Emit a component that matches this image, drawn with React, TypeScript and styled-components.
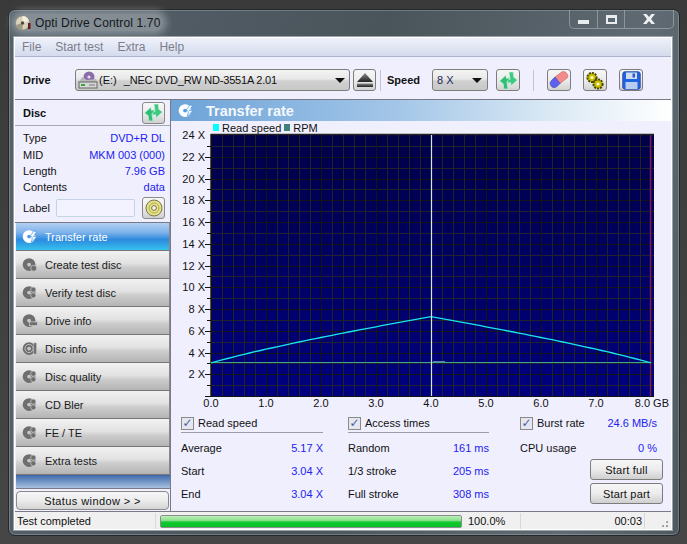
import React from "react";
import styled, { createGlobalStyle } from "styled-components";

const GlobalStyle = createGlobalStyle`
  html, body {
    margin: 0;
    padding: 0;
    background: #3d3d3d;
  }
  body {
    font-family: "Liberation Sans", Arial, sans-serif;
    font-size: 11px;
    color: #111;
  }
`;

const NAV_ITEMS = [
  { label: "Transfer rate", icon: "transfer" },
  { label: "Create test disc", icon: "create" },
  { label: "Verify test disc", icon: "gear" },
  { label: "Drive info", icon: "drive" },
  { label: "Disc info", icon: "info" },
  { label: "Disc quality", icon: "gear" },
  { label: "CD Bler", icon: "gear" },
  { label: "FE / TE", icon: "gear" },
  { label: "Extra tests", icon: "gear" },
];

const DISC_ROWS = [
  ["Type", "DVD+R DL"],
  ["MID", "MKM 003 (000)"],
  ["Length", "7.96 GB"],
  ["Contents", "data"],
];

const READ_ROWS = [
  ["Average", "5.17 X"],
  ["Start", "3.04 X"],
  ["End", "3.04 X"],
];

const ACCESS_ROWS = [
  ["Random", "161 ms"],
  ["1/3 stroke", "205 ms"],
  ["Full stroke", "308 ms"],
];

function RefreshIcon() {
  const arrow = "M0.5 9.5 L6.5 4 L7 7 L10.5 6.5 L9 10 L7.5 10 L8.5 17 L4.5 17 L4 12 Z";
  return (
    <svg width="19" height="19" viewBox="0 0 18 18">
      <path d={arrow} fill="#2fbf74" stroke="#d8f5e4" strokeWidth=".5" />
      <path d={arrow} fill="#3ccb80" stroke="#d8f5e4" strokeWidth=".5" transform="rotate(180 9 9)" />
    </svg>
  );
}

function DriveIcon() {
  return (
    <svg width="20" height="18" viewBox="0 0 20 18">
      <circle cx="11" cy="6" r="5.5" fill="#8a6cab" />
      <circle cx="11" cy="6" r="1.6" fill="#e6e0f0" />
      <path d="M4 6 L1 11 L19 11 L18 8 L9 9 Z" fill="#b8b8b8" />
      <rect x="1" y="11" width="18" height="6" fill="#d8d8d8" stroke="#666" />
      <rect x="3" y="13" width="4" height="2" fill="#3aa53a" />
      <rect x="11" y="13.5" width="6" height="1" fill="#777" />
    </svg>
  );
}

function EjectIcon() {
  return (
    <svg width="18" height="14" viewBox="0 0 18 14">
      <defs>
        <linearGradient id="ej" x1="0" y1="0" x2="0" y2="1">
          <stop offset="0" stopColor="#8a8a8a" />
          <stop offset="1" stopColor="#222" />
        </linearGradient>
      </defs>
      <path d="M9 0 L17 9 L1 9 Z" fill="url(#ej)" />
      <rect x="1" y="10.5" width="16" height="3.5" fill="url(#ej)" />
    </svg>
  );
}

function EraserIcon() {
  return (
    <svg width="20" height="18" viewBox="0 0 20 18">
      <path d="M6 6 L13 0.8 Q15 0 17 1.5 L18.5 3.5 Q19.5 6 18 7 L11 12.5 Z" fill="#f28b8b" stroke="#c96060" strokeWidth=".6" />
      <path d="M6 6 L11 12.5 L8 15.5 Q5.5 17.5 3 16 L1.5 14 Q0.5 11.5 2 10 Z" fill="#5c62ee" stroke="#3a3fb8" strokeWidth=".6" />
    </svg>
  );
}

function GearsIcon() {
  return (
    <svg width="20" height="19" viewBox="0 0 20 19">
      <circle cx="7" cy="6.5" r="4.6" fill="#c9c000" stroke="#4a4600" strokeWidth="2" strokeDasharray="2 1" />
      <circle cx="7" cy="6.5" r="1.5" fill="#fffbe0" />
      <circle cx="13" cy="13" r="4.6" fill="#c9c000" stroke="#4a4600" strokeWidth="2" strokeDasharray="2 1" />
      <circle cx="13" cy="13" r="1.5" fill="#fffbe0" />
    </svg>
  );
}

function FloppyIcon() {
  return (
    <svg width="19" height="19" viewBox="0 0 19 19">
      <rect x="0.8" y="0.8" width="17.4" height="17.4" rx="2" fill="#1f63e0" stroke="#2c4fa8" />
      <rect x="4" y="1.5" width="11" height="6.5" fill="#cfdcf2" />
      <rect x="3.5" y="11" width="12" height="7" fill="#b9cdf0" />
      <rect x="10.5" y="2.5" width="2.5" height="4" fill="#2c5cc0" />
    </svg>
  );
}

function DiscButtonIcon() {
  return (
    <svg width="18" height="18" viewBox="0 0 18 18">
      <circle cx="9" cy="9" r="8" fill="#e4e08c" stroke="#77774a" />
      <circle cx="9" cy="9" r="5" fill="none" stroke="#b3ae4c" />
      <circle cx="9" cy="9" r="2.4" fill="#f6f6e2" stroke="#77774a" />
    </svg>
  );
}

function TitleDisc() {
  return (
    <svg width="16" height="16" viewBox="0 0 16 16">
      <circle cx="7.5" cy="8" r="7" fill="#d8d2bc" stroke="#8a8468" strokeWidth=".6" />
      <path d="M7.5 1 A7 7 0 0 1 14 6 L7.5 8 Z" fill="#f4efd8" />
      <path d="M7.5 15 A7 7 0 0 1 1 10 L7.5 8 Z" fill="#9c9a84" />
      <circle cx="7.5" cy="8" r="1.7" fill="#4d4a3c" />
      <rect x="13" y="8" width="2.5" height="6" fill="#6b1a1a" />
    </svg>
  );
}

function SectionIcon({ kind, color }: { kind: string; color: string }) {
  const hole = kind === "transfer" ? "#4f9be6" : "#c8c8c8";
  return (
    <svg width="16" height="15" viewBox="0 0 17 16">
      <circle cx="7.5" cy="8" r="6.8" fill={color} />
      <circle cx="7.5" cy="8" r="2" fill={hole} />
      {kind === "transfer" && (
        <path d="M9 7 L13 2 L15.5 3 L12 8 L16 8 L10 14 L11 9.5 Z" fill={color} stroke={hole} strokeWidth=".8" />
      )}
      {kind === "create" && <circle cx="12.5" cy="12" r="3.2" fill={color} stroke="#ccc" strokeWidth=".8" />}
      {kind === "gear" && (
        <g fill={color} stroke="#ccc" strokeWidth=".8">
          <circle cx="12" cy="5" r="2.8" />
          <circle cx="12" cy="11" r="2.8" />
        </g>
      )}
      {kind === "drive" && <rect x="8" y="9.5" width="8.5" height="4" fill={color} stroke="#ccc" strokeWidth=".8" />}
      {kind === "info" && (
        <g>
          <circle cx="7.5" cy="8" r="4.4" fill="none" stroke="#ccc" strokeWidth=".9" />
          <rect x="12.5" y="2" width="3" height="12" fill={color} stroke="#ccc" strokeWidth=".6" />
        </g>
      )}
    </svg>
  );
}

function TransferChart() {
  // plot area inside the svg: x 40..483, y 1..262
  const left = 40;
  const right = 483;
  const top = 1;
  const bottom = 262;
  const stepY = 10.875;
  const stepX = 11;

  const hLines = Array.from({ length: 24 }, (_, i) => i);
  const vLines = Array.from({ length: 41 }, (_, i) => i);
  const xToPx = (gb: number) => left + gb * 55;
  const speedToPx = (x: number) => bottom - x * stepY;
  const snap = (y: number) => Math.round(y) + 0.5;

  const speedPts: string[] = [];
  for (let gb = 0; gb <= 8; gb += 0.1) {
    const d = gb <= 4 ? gb : 8 - gb;
    const curved = Math.sqrt(9.24 + 11 * d);
    const straight = 3.04 + (d / 4) * 4.26;
    speedPts.push(`${xToPx(gb).toFixed(1)},${speedToPx((curved + straight) / 2).toFixed(1)}`);
  }

  return (
    <ChartSvg width="500" height="278" viewBox="0 0 500 278">
      <defs>
        <linearGradient id="plotBg" x1="0" y1="0" x2="0" y2="1">
          <stop offset="0" stopColor="#000048" />
          <stop offset="1" stopColor="#00007f" />
        </linearGradient>
      </defs>
      <rect x={left} y={top} width={right - left} height={bottom - top} fill="url(#plotBg)" />
      {hLines.map((i) => (
        <line
          key={i}
          x1={left}
          x2={right}
          y1={snap(bottom - i * stepY)}
          y2={snap(bottom - i * stepY)}
          stroke={i % 2 === 0 ? "#141414" : "#22222a"}
        />
      ))}
      {vLines.map((i) => (
        <line
          key={i}
          x1={left + i * stepX + 0.5}
          x2={left + i * stepX + 0.5}
          y1={top}
          y2={bottom}
          stroke={i % 5 === 0 ? "#141418" : "#22222a"}
        />
      ))}
      <line x1={479.5} x2={479.5} y1={top} y2={bottom} stroke="#80107a" strokeWidth="1.4" />
      <line x1={left} x2={right} y1={0.5} y2={0.5} stroke="#222" strokeWidth="1.4" />
      <line x1={40} x2={40} y1={0} y2={bottom} stroke="#111" strokeWidth="1.4" />
      {hLines.map((i) => (
        <line
          key={i}
          x1={i % 2 === 0 ? 34 : 36}
          x2={40}
          y1={snap(bottom - i * stepY)}
          y2={snap(bottom - i * stepY)}
          stroke="#111"
        />
      ))}
      <line x1={40} x2={480} y1={228.5} y2={228.5} stroke="#3fa596" />
      <line x1={262} x2={274} y1={227.5} y2={227.5} stroke="#5a7fb0" />
      <polyline points={speedPts.join(" ")} fill="none" stroke="#19e6e6" strokeWidth="1.3" />
      <line x1={260.5} x2={260.5} y1={top} y2={bottom} stroke="#cfe8e2" strokeWidth="1.2" />
      <g fontFamily='"Liberation Sans", Arial, sans-serif' fontSize="11" fill="#111">
        {Array.from({ length: 12 }, (_, i) => (i + 1) * 2).map((v) => (
          <text key={v} x={34} y={speedToPx(v) + 4} textAnchor="end">
            {v} X
          </text>
        ))}
        {Array.from({ length: 8 }, (_, i) => i).map((v) => (
          <text key={v} x={xToPx(v)} y={273} textAnchor="middle">
            {v}.0
          </text>
        ))}
        <text x={498} y={273} textAnchor="end">
          8.0 GB
        </text>
      </g>
    </ChartSvg>
  );
}

export default function App() {
  return (
    <Screen>
      <GlobalStyle />
      <Window>
        <TitleBar>
          <TitleGroup>
            <TitleDisc />
            <TitleText>Opti Drive Control 1.70</TitleText>
          </TitleGroup>
          <CaptionButtons>
            <CaptionButton $width={28}>
              <MinGlyph />
            </CaptionButton>
            <CaptionButton $width={27}>
              <MaxGlyph />
            </CaptionButton>
            <CaptionButton $width={48}>
              <svg width="14" height="10" viewBox="0 0 14 10">
                <path d="M1 0 H4.5 L7 3 L9.5 0 H13 L9 5 L13 10 H9.5 L7 7 L4.5 10 H1 L5 5 Z" fill="#eef1f2" />
              </svg>
            </CaptionButton>
          </CaptionButtons>
        </TitleBar>
        <Client>
          <MenuBar>
            <MenuItem>File</MenuItem>
            <MenuItem>Start test</MenuItem>
            <MenuItem>Extra</MenuItem>
            <MenuItem>Help</MenuItem>
          </MenuBar>
          <Toolbar>
            <DriveLabel>Drive</DriveLabel>
            <DriveSelect>
              <DriveIcon />
              <DriveLetter>(E:)</DriveLetter>
              <DriveName>_NEC DVD_RW ND-3551A 2.01</DriveName>
              <Caret />
            </DriveSelect>
            <ToolButton $width={23} $ml={3}>
              <EjectIcon />
            </ToolButton>
            <ToolSeparator $ml={4} />
            <SpeedLabel>Speed</SpeedLabel>
            <SpeedSelect>
              8 X
              <Caret />
            </SpeedSelect>
            <ToolButton $width={24} $ml={8}>
              <RefreshIcon />
            </ToolButton>
            <ToolSeparator $ml={13} />
            <ToolButton $width={24} $ml={13}>
              <EraserIcon />
            </ToolButton>
            <ToolButton $width={24} $ml={12}>
              <GearsIcon />
            </ToolButton>
            <ToolButton $width={24} $ml={12}>
              <FloppyIcon />
            </ToolButton>
          </Toolbar>
          <Main>
            <SideColumn>
              <DiscPanel>
                <DiscHead>
                  <strong>Disc</strong>
                  <SmallButton>
                    <RefreshIcon />
                  </SmallButton>
                </DiscHead>
                <DiscRows>
                  {DISC_ROWS.map(([name, value]) => (
                    <DiscRow key={name}>
                      <span>{name}</span>
                      <Value>{value}</Value>
                    </DiscRow>
                  ))}
                </DiscRows>
                <LabelRow>
                  <span>Label</span>
                  <LabelInput />
                  <SmallButton>
                    <DiscButtonIcon />
                  </SmallButton>
                </LabelRow>
              </DiscPanel>
              <NavList>
                {NAV_ITEMS.map((item, i) => (
                  <NavItem key={item.label} $active={i === 0}>
                    <SectionIcon kind={item.icon} color={i === 0 ? "#ffffff" : "#6e6e6e"} />
                    <span>{item.label}</span>
                  </NavItem>
                ))}
              </NavList>
              <BlueStrip />
              <StatusButtonWrap>
                <StatusWindowButton>Status window &gt; &gt;</StatusWindowButton>
              </StatusButtonWrap>
            </SideColumn>
            <RightPanel>
              <PanelHeader>
                <SectionIcon kind="transfer" color="#ffffff" />
                <PanelTitle>Transfer rate</PanelTitle>
              </PanelHeader>
              <Legend>
                <Swatch $color="#00ffff" />
                <span>Read speed</span>
                <Swatch $color="#3f8079" />
                <span>RPM</span>
              </Legend>
              <TransferChart />
              <Results>
                <ResultColumn>
                  <CheckHead $line>
                    <CheckBox>✓</CheckBox>
                    Read speed
                  </CheckHead>
                  {READ_ROWS.map(([name, value]) => (
                    <ResultRow key={name}>
                      <span>{name}</span>
                      <Value>{value}</Value>
                    </ResultRow>
                  ))}
                </ResultColumn>
                <ResultColumn>
                  <CheckHead $line>
                    <CheckBox>✓</CheckBox>
                    Access times
                  </CheckHead>
                  {ACCESS_ROWS.map(([name, value]) => (
                    <ResultRow key={name}>
                      <span>{name}</span>
                      <Value>{value}</Value>
                    </ResultRow>
                  ))}
                </ResultColumn>
                <BurstColumn>
                  <CheckHead>
                    <CheckBox>✓</CheckBox>
                    Burst rate
                    <BurstValue>24.6 MB/s</BurstValue>
                  </CheckHead>
                  <CpuRow>
                    <span>CPU usage</span>
                    <Value>0 %</Value>
                  </CpuRow>
                  <StartButton>Start full</StartButton>
                  <StartButton>Start part</StartButton>
                </BurstColumn>
              </Results>
            </RightPanel>
          </Main>
          <StatusBar>
            <StatusText>Test completed</StatusText>
            <ProgressTrack>
              <ProgressFill style={{ width: "100%" }} />
            </ProgressTrack>
            <Percent>100.0%</Percent>
            <Elapsed>00:03</Elapsed>
            <Grip />
          </StatusBar>
        </Client>
      </Window>
    </Screen>
  );
}

const Screen = styled.div`
  width: 687px;
  height: 544px;
  padding: 9px 7px 8px 8px;
  box-sizing: border-box;
  overflow: hidden;
  background: linear-gradient(#3a3a3a, #464646);
`;

const Window = styled.div`
  width: 672px;
  height: 527px;
  box-sizing: border-box;
  padding: 0 7px 5px 5px;
  border: 1px solid #23282b;
  border-radius: 7px;
  background: linear-gradient(100deg, #56616a 0%, #49545b 50%, #5f6a72 85%, #4d585f 100%);
  box-shadow: inset 0 0 0 1px rgba(255, 255, 255, 0.22);
  display: flex;
  flex-direction: column;
`;

const TitleBar = styled.div`
  height: 27px;
  flex-shrink: 0;
  display: flex;
  justify-content: space-between;
  align-items: flex-start;
`;

const TitleGroup = styled.div`
  display: flex;
  align-items: center;
  gap: 4px;
  height: 17px;
  margin: 4px 0 0 1px;
  padding-right: 2px;
  border-radius: 9px;
  background: rgba(200, 208, 212, 0.42);
  box-shadow: 0 0 7px 4px rgba(200, 208, 212, 0.42);
`;

const TitleText = styled.span`
  font-size: 12px;
  letter-spacing: 0.15px;
  color: #14181b;
`;

const CaptionButtons = styled.div`
  display: flex;
  height: 18px;
  margin-right: -2px;
  border: 1px solid rgba(255, 255, 255, 0.3);
  border-top: none;
  border-radius: 0 0 5px 5px;
`;

const CaptionButton = styled.div<{ $width: number }>`
  width: ${(p) => p.$width}px;
  box-sizing: border-box;
  display: flex;
  align-items: center;
  justify-content: center;
  border-right: 1px solid rgba(255, 255, 255, 0.3);
  &:last-child {
    border-right: none;
  }
`;

const MinGlyph = styled.div`
  width: 11px;
  height: 4px;
  margin-top: 5px;
  background: #e8ecee;
`;

const MaxGlyph = styled.div`
  width: 7px;
  height: 4px;
  border: 2px solid #e8ecee;
  border-top-width: 3px;
`;

const Client = styled.div`
  flex: 1;
  min-height: 0;
  border: 1px solid #ffffff;
  outline: 1px solid #9aa3a8;
  background: #f0effe;
  display: flex;
  flex-direction: column;
`;

const MenuBar = styled.div`
  height: 18px;
  flex-shrink: 0;
  display: flex;
  align-items: center;
  padding-left: 7px;
  gap: 14px;
  font-size: 12px;
  background: linear-gradient(#eef1fa, #d4dbec);
  border-bottom: 1px solid #aeb3cc;
`;

const MenuItem = styled.span`
  color: #7d7d8e;
`;

const Toolbar = styled.div`
  height: 42px;
  flex-shrink: 0;
  box-sizing: border-box;
  padding: 12px 0 8px 8px;
  display: flex;
  align-items: center;
`;

const DriveLabel = styled.strong`
  width: 52px;
`;

const DriveSelect = styled.div`
  width: 275px;
  height: 22px;
  box-sizing: border-box;
  display: flex;
  align-items: center;
  padding: 0 4px 0 2px;
  border: 1px solid #7d7d7d;
  border-radius: 3px;
  background: linear-gradient(#f4f4f4 0%, #e8e8e8 45%, #d0d0d0 55%, #c8c8c8 100%);
`;

const DriveLetter = styled.span`
  margin-left: 1px;
`;

const DriveName = styled.span`
  margin-left: 7px;
  flex: 1;
  letter-spacing: -0.2px;
`;

const Caret = styled.span`
  width: 0;
  height: 0;
  border-left: 5px solid transparent;
  border-right: 5px solid transparent;
  border-top: 5px solid #111;
  margin-left: auto;
`;

const ToolButton = styled.div<{ $width: number; $ml: number }>`
  width: ${(p) => p.$width}px;
  height: 22px;
  margin-left: ${(p) => p.$ml}px;
  box-sizing: border-box;
  flex-shrink: 0;
  display: flex;
  align-items: center;
  justify-content: center;
  border: 1px solid #7d7d7d;
  border-radius: 3px;
  background: linear-gradient(#f6f6f6 0%, #ececec 50%, #d2d2d2 100%);
`;

const ToolSeparator = styled.div<{ $ml: number }>`
  width: 1px;
  height: 21px;
  margin-left: ${(p) => p.$ml}px;
  background: #c4c4cc;
`;

const SpeedLabel = styled.strong`
  width: 45px;
  margin-left: 6px;
`;

const SpeedSelect = styled.div`
  width: 56px;
  height: 22px;
  box-sizing: border-box;
  display: flex;
  align-items: center;
  padding: 0 5px 0 4px;
  color: #1c2a58;
  border: 1px solid #7d7d7d;
  border-radius: 3px;
  background: linear-gradient(#f4f4f4 0%, #e8e8e8 45%, #d0d0d0 55%, #c8c8c8 100%);
`;

const Main = styled.div`
  flex: 1;
  min-height: 0;
  display: flex;
  border-top: 1px solid #7a7a86;
  border-bottom: 1px solid #7a7a86;
`;

const SideColumn = styled.div`
  width: 155px;
  flex-shrink: 0;
  display: flex;
  flex-direction: column;
`;

const DiscPanel = styled.div`
  height: 122px;
  flex-shrink: 0;
  padding-left: 8px;
  padding-right: 5px;
  border-bottom: 1px solid #7a7a86;
`;

const DiscHead = styled.div`
  height: 25px;
  display: flex;
  align-items: center;
  justify-content: space-between;
  margin: 0 -5px 0 -8px;
  padding: 0 5px 0 8px;
  border-bottom: 1px solid #a8a8b4;
`;

const SmallButton = styled.div`
  width: 23px;
  height: 22px;
  box-sizing: border-box;
  flex-shrink: 0;
  display: flex;
  align-items: center;
  justify-content: center;
  border: 1px solid #8a8a8a;
  border-radius: 3px;
  background: linear-gradient(#f8f8f8 0%, #ececec 50%, #d0d0d0 100%);
`;

const DiscRows = styled.div`
  margin-top: 4px;
  display: flex;
  flex-direction: column;
`;

const DiscRow = styled.div`
  height: 16.4px;
  display: flex;
  align-items: center;
  justify-content: space-between;
`;

const Value = styled.span`
  color: #2222f0;
`;

const LabelRow = styled.div`
  margin-top: 1px;
  display: flex;
  align-items: center;
  gap: 6px;
  span {
    width: 27px;
  }
`;

const LabelInput = styled.div`
  width: 80px;
  height: 18px;
  box-sizing: border-box;
  margin-right: 1px;
  background: #f3f3ff;
  border: 1px solid #c2d4e6;
  border-radius: 2px;
`;

const NavList = styled.div`
  display: flex;
  flex-direction: column;
  padding-left: 1px;
`;

const NavItem = styled.div<{ $active?: boolean }>`
  height: 28px;
  box-sizing: border-box;
  display: flex;
  align-items: center;
  gap: 7px;
  padding-left: 6px;
  color: ${(p) => (p.$active ? "#ffffff" : "#1a1a1a")};
  border-bottom: 1px solid #77777a;
  background: ${(p) =>
    p.$active
      ? "linear-gradient(#b3d0f2 0%, #7db2ea 35%, #2c8ade 62%, #35c2ee 100%)"
      : "linear-gradient(#f2f2f2 0%, #e2e2e2 45%, #cdcdcd 60%, #b4b4b4 100%)"};
  border-right: 1px solid #8a8a8a;
`;

const BlueStrip = styled.div`
  height: 13px;
  flex-shrink: 0;
  margin-left: 1px;
  background: linear-gradient(#3d68a8, #a7c2e2);
  border-bottom: 1px solid #7a7a86;
`;

const StatusButtonWrap = styled.div`
  flex: 1;
  padding: 2px 1px 0 1px;
`;

const StatusWindowButton = styled.div`
  height: 19px;
  box-sizing: border-box;
  display: flex;
  align-items: center;
  justify-content: center;
  letter-spacing: 0.4px;
  border: 1px solid #8a8a8a;
  border-radius: 4px;
  background: linear-gradient(#f6f6f6 0%, #ececec 50%, #d4d4d4 100%);
`;

const RightPanel = styled.div`
  flex: 1;
  min-width: 0;
  display: flex;
  flex-direction: column;
  border-left: 1px solid #7a7a86;
`;

const PanelHeader = styled.div`
  height: 21px;
  flex-shrink: 0;
  display: flex;
  align-items: center;
  padding-left: 7px;
  gap: 12px;
  background: linear-gradient(90deg, #6da3d8 0%, #a3c6e8 45%, #d8e8f4 75%, #ffffff 100%);
`;

const PanelTitle = styled.span`
  font-size: 14.5px;
  font-weight: bold;
  color: #f4f8fc;
`;

const Legend = styled.div`
  height: 13px;
  flex-shrink: 0;
  display: flex;
  align-items: center;
  padding-left: 42px;
  gap: 3px;
`;

const Swatch = styled.i<{ $color: string }>`
  width: 6px;
  height: 7px;
  background: ${(p) => p.$color};
`;

const ChartSvg = styled.svg`
  display: block;
  flex-shrink: 0;
  overflow: visible;
`;

const Results = styled.div`
  flex: 1;
  display: grid;
  grid-template-columns: 142px 141px 1fr;
  column-gap: 25px;
  padding: 2px 8px 0 10px;
`;

const ResultColumn = styled.div`
  display: flex;
  flex-direction: column;
`;

const BurstColumn = styled.div`
  margin-left: 6px;
  display: flex;
  flex-direction: column;
  align-items: flex-end;
`;

const CheckHead = styled.div<{ $line?: boolean }>`
  height: 18px;
  width: 100%;
  margin-bottom: 3px;
  display: flex;
  align-items: center;
  gap: 4px;
  border-bottom: ${(p) => (p.$line ? "1px solid #9c9ca4" : "1px solid transparent")};
`;

const CheckBox = styled.span`
  width: 11px;
  height: 11px;
  flex-shrink: 0;
  display: flex;
  align-items: center;
  justify-content: center;
  font-size: 12px;
  font-weight: bold;
  color: #4a5fa8;
  background: #e6e6ee;
  border: 1px solid #8a8a8a;
  font-family: "DejaVu Sans", sans-serif;
`;

const ResultRow = styled.div`
  height: 23px;
  display: flex;
  align-items: center;
  justify-content: space-between;
`;

const BurstValue = styled.span`
  margin-left: auto;
  margin-right: 6px;
  color: #2222f0;
`;

const CpuRow = styled.div`
  width: 100%;
  height: 23px;
  box-sizing: border-box;
  padding-right: 6px;
  display: flex;
  align-items: center;
  justify-content: space-between;
`;

const StartButton = styled.div`
  width: 73px;
  height: 21px;
  margin-bottom: 3px;
  box-sizing: border-box;
  display: flex;
  align-items: center;
  justify-content: center;
  letter-spacing: 0.2px;
  border: 1px solid #7d7d7d;
  border-radius: 3px;
  background: linear-gradient(#f6f6f6 0%, #ececec 50%, #cfcfcf 100%);
`;

const StatusBar = styled.div`
  height: 17px;
  box-sizing: border-box;
  padding-top: 1px;
  flex-shrink: 0;
  display: flex;
  align-items: center;
  background: #f0f0f0;
`;

const StatusText = styled.span`
  width: 138px;
  padding-left: 2px;
  border-right: 1px solid #d8d8d8;
  line-height: 16px;
  flex-shrink: 0;
`;

const ProgressTrack = styled.div`
  width: 302px;
  height: 13px;
  margin-left: 4px;
  flex-shrink: 0;
  box-sizing: border-box;
  border: 1px solid #8c8c8c;
  border-radius: 2px;
  background: #e8e8e8;
`;

const ProgressFill = styled.div`
  height: 100%;
  background: linear-gradient(#b8f0b8 0%, #8ee08e 40%, #10c830 55%, #08c028 100%);
`;

const Percent = styled.span`
  width: 59px;
  box-sizing: border-box;
  padding-left: 6px;
  line-height: 16px;
  flex-shrink: 0;
  border-right: 1px solid #d8d8d8;
`;

const Elapsed = styled.span`
  width: 124px;
  box-sizing: border-box;
  padding-right: 2px;
  line-height: 16px;
  text-align: right;
  flex-shrink: 0;
  border-right: 1px solid #d8d8d8;
`;

const Grip = styled.span`
  width: 11px;
  height: 11px;
  margin-left: auto;
  margin-right: 1px;
  align-self: flex-end;
  clip-path: polygon(100% 0, 100% 100%, 0 100%);
  background: radial-gradient(circle at 1px 1px, #9c9c9c 1px, transparent 1.2px) right bottom / 4px 4px;
`;
